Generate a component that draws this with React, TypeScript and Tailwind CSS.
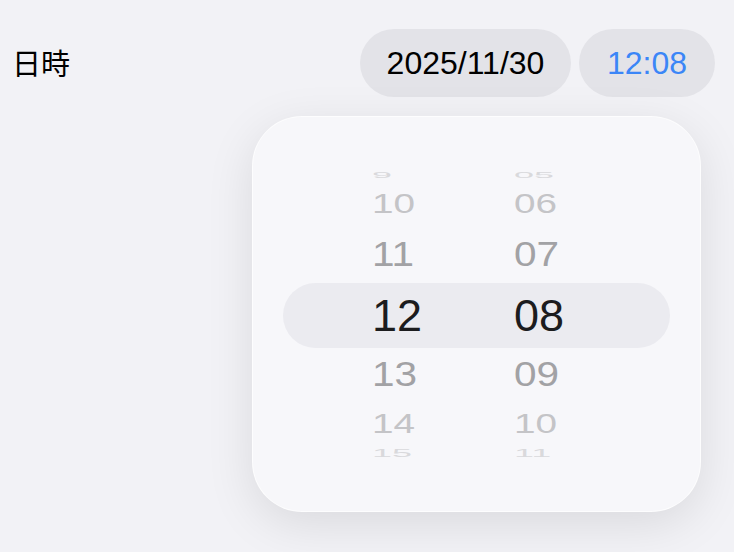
import React from "react"

type Row = {
  hour: string
  minute: string
  height: string
  text: string
  scale: string
}

// rows of the wheel, top to bottom; the middle one is the selected value
const above: Row[] = [
  { hour: "9", minute: "05", height: "h-[16px]", text: "text-[#d9d9dc]", scale: "scale-x-[0.8] scale-y-[0.22]" },
  { hour: "10", minute: "06", height: "h-[42px]", text: "text-[#c4c4c7]", scale: "scale-x-[0.86] scale-y-[0.6]" },
  { hour: "11", minute: "07", height: "h-[58px]", text: "text-[#a2a2a5]", scale: "scale-x-[0.9] scale-y-[0.78]" },
]

const below: Row[] = [
  { hour: "13", minute: "09", height: "h-[54px]", text: "text-[#a2a2a5]", scale: "scale-x-[0.9] scale-y-[0.76]" },
  { hour: "14", minute: "10", height: "h-[44px]", text: "text-[#c4c4c7]", scale: "scale-x-[0.86] scale-y-[0.6]" },
  { hour: "15", minute: "11", height: "h-[16px]", text: "text-[#d9d9dc]", scale: "scale-x-[0.8] scale-y-[0.25]" },
]

function WheelRow({ row }: { row: Row }) {
  return (
    <div className={`flex items-center overflow-hidden pl-[119px] ${row.height} ${row.text}`}>
      <div className="w-[142px]">
        <span className={`block origin-left leading-none ${row.scale}`}>{row.hour}</span>
      </div>
      <div>
        <span className={`block origin-left leading-none ${row.scale}`}>{row.minute}</span>
      </div>
    </div>
  )
}

export default function App() {
  return (
    <div className="flex h-[552px] w-[734px] flex-col overflow-hidden bg-[#f2f2f6] font-['Liberation_Sans','Noto_Sans_CJK_JP',sans-serif]">
      <div className="flex items-center justify-between pl-3 pr-[19px] pt-[29px]">
        <span className="text-[29px] text-black font-['Noto_Sans_CJK_JP',sans-serif]">日時</span>
        <div className="flex gap-2">
          <button className="flex h-[68px] w-[211px] items-center justify-center rounded-full bg-[#e3e3e8] text-[32px] text-black">
            2025/11/30
          </button>
          <button className="flex h-[68px] w-[136px] items-center justify-center rounded-full bg-[#e3e3e8] text-[32px] text-[#3b86f7]">
            12:08
          </button>
        </div>
      </div>

      <div className="mr-[33px] mt-[19px] flex h-[396px] w-[449px] flex-col justify-center self-end rounded-[50px] border border-white/70 bg-[#f7f7fa] shadow-[0_12px_48px_rgba(0,0,0,0.10)]">
        <div className="flex flex-col text-[45px]">
          {above.map((r) => (
            <WheelRow key={r.hour} row={r} />
          ))}
          <div className="mx-[30px] flex h-[65px] items-center rounded-full bg-[#ebebf0] pl-[89px] text-[#1c1c1e]">
            <span className="w-[142px] leading-none">12</span>
            <span className="leading-none">08</span>
          </div>
          {below.map((r) => (
            <WheelRow key={r.hour} row={r} />
          ))}
        </div>
      </div>
    </div>
  )
}
